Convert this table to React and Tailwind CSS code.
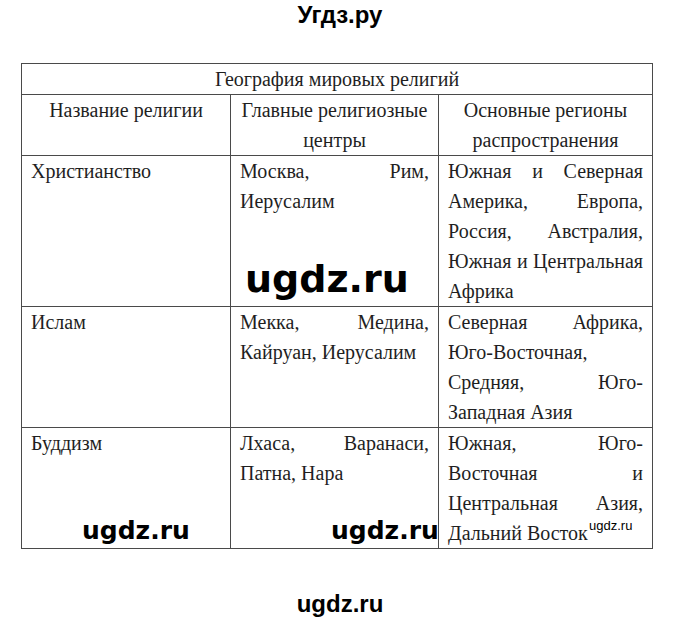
const J = ({ children }) => (
  <div className="text-justify [text-align-last:justify]">{children}</div>
);
const L = ({ children }) => <div>{children}</div>;

const rows = [
  {
    name: "Христианство",
    centers: [<J key="a">Москва, Рим,</J>, <L key="b">Иерусалим</L>],
    regions: [
      <J key="a">Южная и Северная</J>,
      <J key="b">Америка, Европа,</J>,
      <J key="c">Россия, Австралия,</J>,
      <J key="d">Южная и Центральная</J>,
      <L key="e">Африка</L>,
    ],
  },
  {
    name: "Ислам",
    centers: [<J key="a">Мекка, Медина,</J>, <L key="b">Кайруан, Иерусалим</L>],
    regions: [
      <J key="a">Северная Африка,</J>,
      <L key="b">Юго-Восточная,</L>,
      <J key="c">Средняя, Юго-</J>,
      <L key="d">Западная Азия</L>,
    ],
  },
  {
    name: "Буддизм",
    centers: [<J key="a">Лхаса, Варанаси,</J>, <L key="b">Патна, Нара</L>],
    regions: [
      <J key="a">Южная, Юго-</J>,
      <J key="b">Восточная и</J>,
      <J key="c">Центральная Азия,</J>,
      <L key="d">Дальний Восток</L>,
    ],
  },
];

const cell =
  "border-[1.5px] border-[#4a4a4a] px-[9px] py-0 align-top font-['Liberation_Serif',serif] text-[20px] leading-[30px] text-[#1f1f1f]";

export default function App() {
  return (
    <div className="relative w-[680px] h-[622px] bg-white overflow-hidden">
      <div className="pt-[3px] text-center text-[24px] leading-none font-bold text-black font-['Liberation_Sans',sans-serif]">
        Угдз.ру
      </div>

      <table className="mt-[36px] ml-[21px] w-[631px] border-collapse table-fixed font-['Liberation_Serif',serif]">
        <colgroup>
          <col className="w-[209px]" />
          <col className="w-[208px]" />
          <col className="w-[214px]" />
        </colgroup>
        <tbody>
          <tr>
            <td colSpan={3} className={cell + " text-center"}>
              География мировых религий
            </td>
          </tr>
          <tr>
            <td className={cell + " text-center"}>Название религии</td>
            <td className={cell + " text-center"}>
              Главные религиозные
              <br />
              центры
            </td>
            <td className={cell + " text-center"}>
              Основные регионы
              <br />
              распространения
            </td>
          </tr>
          {rows.map((r) => (
            <tr key={r.name}>
              <td className={cell}>{r.name}</td>
              <td className={cell}>{r.centers}</td>
              <td className={cell}>{r.regions}</td>
            </tr>
          ))}
        </tbody>
      </table>

      <div className="mt-[43px] text-center text-[24px] leading-none font-bold text-black font-['Liberation_Sans',sans-serif]">
        ugdz.ru
      </div>

      {/* watermarks */}
      <div className="absolute left-[245px] top-[260px] text-[38px] leading-none font-bold text-black font-['DejaVu_Sans',sans-serif]">
        ugdz.ru
      </div>
      <div className="absolute left-[82px] top-[518px] text-[25px] leading-none font-bold text-black font-['DejaVu_Sans',sans-serif]">
        ugdz.ru
      </div>
      <div className="absolute left-[331px] top-[518px] text-[25px] leading-none font-bold text-black font-['DejaVu_Sans',sans-serif]">
        ugdz.ru
      </div>
      <div className="absolute left-[589px] top-[519px] text-[13px] leading-none text-black font-['Liberation_Sans',sans-serif]">
        ugdz.ru
      </div>
    </div>
  );
}
